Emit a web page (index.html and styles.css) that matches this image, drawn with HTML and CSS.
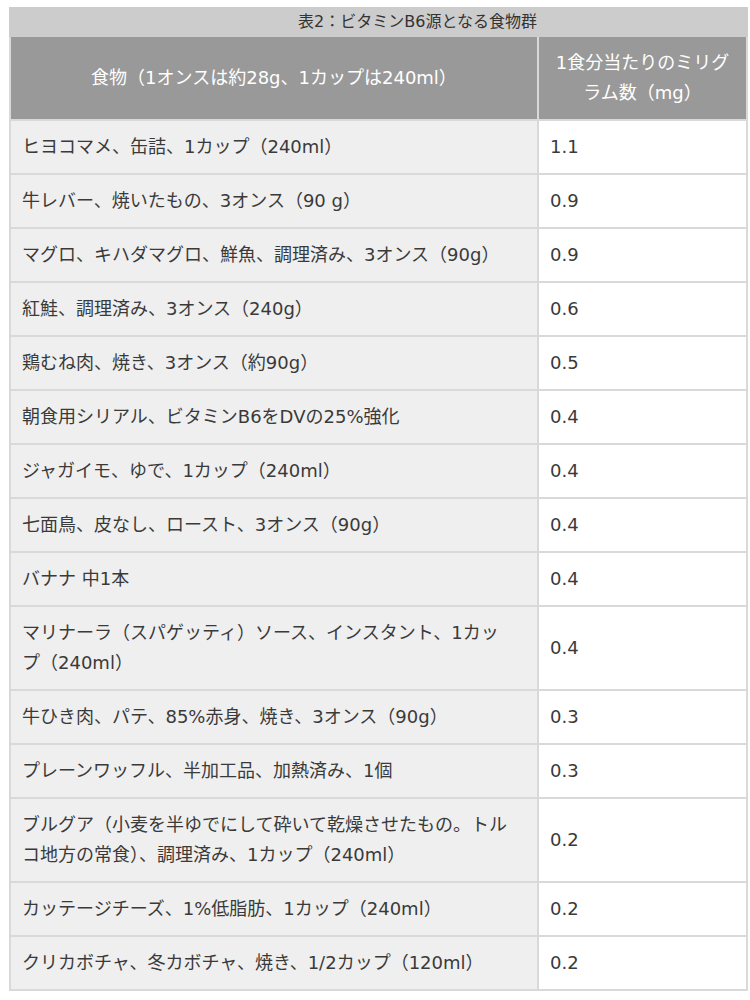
FILE: index.html
```html
<!DOCTYPE html>
<html lang="ja">
<head>
<meta charset="utf-8">
<title>表2：ビタミンB6源となる食物群</title>
<link rel="stylesheet" href="styles.css">
</head>
<body>
<table class="food-table">
  <caption class="food-caption">表2：ビタミンB6源となる食物群</caption>
  <colgroup>
    <col class="col-food">
    <col class="col-mg">
  </colgroup>
  <thead>
    <tr>
      <th>食物（1オンスは約28g、1カップは240ml）</th>
      <th>1食分当たりのミリグラム数（mg）</th>
    </tr>
  </thead>
  <tbody>
    <tr><td>ヒヨコマメ、缶詰、1カップ（240ml）</td><td>1.1</td></tr>
    <tr><td>牛レバー、焼いたもの、3オンス（90 g）</td><td>0.9</td></tr>
    <tr><td>マグロ、キハダマグロ、鮮魚、調理済み、3オンス（90g）</td><td>0.9</td></tr>
    <tr><td>紅鮭、調理済み、3オンス（240g）</td><td>0.6</td></tr>
    <tr><td>鶏むね肉、焼き、3オンス（約90g）</td><td>0.5</td></tr>
    <tr><td>朝食用シリアル、ビタミンB6をDVの25%強化</td><td>0.4</td></tr>
    <tr><td>ジャガイモ、ゆで、1カップ（240ml）</td><td>0.4</td></tr>
    <tr><td>七面鳥、皮なし、ロースト、3オンス（90g）</td><td>0.4</td></tr>
    <tr><td>バナナ 中1本</td><td>0.4</td></tr>
    <tr><td>マリナーラ（スパゲッティ）ソース、インスタント、1カップ（240ml）</td><td>0.4</td></tr>
    <tr><td>牛ひき肉、パテ、85%赤身、焼き、3オンス（90g）</td><td>0.3</td></tr>
    <tr><td>プレーンワッフル、半加工品、加熱済み、1個</td><td>0.3</td></tr>
    <tr><td>ブルグア（小麦を半ゆでにして砕いて乾燥させたもの。トルコ地方の常食）、調理済み、1カップ（240ml）</td><td>0.2</td></tr>
    <tr><td>カッテージチーズ、1%低脂肪、1カップ（240ml）</td><td>0.2</td></tr>
    <tr><td>クリカボチャ、冬カボチャ、焼き、1/2カップ（120ml）</td><td>0.2</td></tr>
  </tbody>
</table>
</body>
</html>
```

FILE: styles.css
```css
html, body {
  margin: 0;
  padding: 0;
  background: #ffffff;
}

body {
  font-family: "DejaVu Sans", "Noto Sans CJK JP", sans-serif;
  color: #3a3a3a;
  padding: 7px 0 0 9px;
}

.food-table {
  border-collapse: collapse;
  table-layout: fixed;
  width: 737px;
  font-size: 18px;
  line-height: 30px;
}

.col-food {
  width: 528px;
}

.col-mg {
  width: 209px;
}

.food-caption {
  background: #cccccc;
  color: #333333;
  font-size: 16px;
  line-height: 30px;
  height: 30px;
  padding-left: 78px;
  text-align: center;
  white-space: nowrap;
}

.food-table th {
  background: #999999;
  color: #ffffff;
  font-weight: normal;
  text-align: center;
  padding: 11px 12px;
  border: 2px solid #d9d9d9;
  border-top: 0;
}

.food-table td {
  padding: 11px 10px 11px 11px;
  border: 2px solid #d9d9d9;
  text-align: left;
  vertical-align: middle;
}

.food-table td:first-child {
  background: #efefef;
  padding-right: 24px;
}

.food-table td:last-child {
  background: #ffffff;
}
```
